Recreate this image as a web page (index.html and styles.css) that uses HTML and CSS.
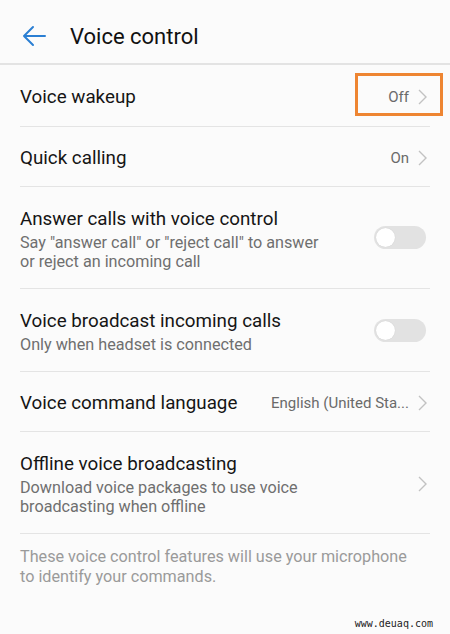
FILE: index.html
```html
<!DOCTYPE html>
<html>
<head>
<meta charset="utf-8">
<link rel="stylesheet" href="styles.css">
</head>
<body>
<div class="screen">
  <header class="topbar">
    <svg class="back" width="24" height="22" viewBox="0 0 24 22"><path d="M23 11H2M11 2L2 11l9 9" fill="none" stroke="#2b7fd3" stroke-width="2" stroke-linecap="round" stroke-linejoin="round"/></svg>
    <h1 class="title">Voice control</h1>
  </header>
  <div class="list">
    <div class="row h62">
      <div class="text"><div class="label">Voice wakeup</div></div>
      <div class="value">Off</div>
      <svg class="chev" width="9" height="16" viewBox="0 0 9 16"><path d="M1 1l7 7-7 7" fill="none" stroke="#c2c2c2" stroke-width="1.4"/></svg>
      <div class="highlight"></div>
    </div>
    <div class="row h60">
      <div class="text"><div class="label">Quick calling</div></div>
      <div class="value">On</div>
      <svg class="chev" width="9" height="16" viewBox="0 0 9 16"><path d="M1 1l7 7-7 7" fill="none" stroke="#c2c2c2" stroke-width="1.4"/></svg>
    </div>
    <div class="row h102">
      <div class="text">
        <div class="label">Answer calls with voice control</div>
        <div class="sub">Say "answer call" or "reject call" to answer<br>or reject an incoming call</div>
      </div>
      <div class="toggle"><div class="knob"></div></div>
    </div>
    <div class="row h83">
      <div class="text">
        <div class="label">Voice broadcast incoming calls</div>
        <div class="sub">Only when headset is connected</div>
      </div>
      <div class="toggle"><div class="knob"></div></div>
    </div>
    <div class="row h60">
      <div class="text"><div class="label">Voice command language</div></div>
      <div class="value">English (United Sta...</div>
      <svg class="chev" width="9" height="16" viewBox="0 0 9 16"><path d="M1 1l7 7-7 7" fill="none" stroke="#c2c2c2" stroke-width="1.4"/></svg>
    </div>
    <div class="row h102">
      <div class="text">
        <div class="label">Offline voice broadcasting</div>
        <div class="sub">Download voice packages to use voice<br>broadcasting when offline</div>
      </div>
      <svg class="chev" width="9" height="16" viewBox="0 0 9 16"><path d="M1 1l7 7-7 7" fill="none" stroke="#c2c2c2" stroke-width="1.4"/></svg>
    </div>
  </div>
  <p class="note">These voice control features will use your microphone<br>to identify your commands.</p>
  <div class="watermark">www.deuaq.com</div>
</div>
</body>
</html>
```
FILE: styles.css
```css
html, body {
  margin: 0;
  padding: 0;
  background: #fbfbfb;
}
.screen {
  position: relative;
  width: 450px;
  height: 634px;
  overflow: hidden;
  font-family: Roboto, "Noto Sans", sans-serif;
  color: #1a1a1a;
}
.topbar {
  height: 63px;
  display: flex;
  align-items: center;
  padding-top: 9px;
  border-bottom: 2px solid #e3e3e3;
  box-sizing: border-box;
  height: 65px;
}
.back {
  margin-left: 22px;
}
.title {
  margin: 0 0 0 24px;
  font-size: 22px;
  font-weight: 400;
  color: #111;
}
.list {
  display: flex;
  flex-direction: column;
}
.row {
  position: relative;
  display: flex;
  align-items: center;
  margin: 0 20px;
  border-bottom: 1px solid #e4e4e4;
  box-sizing: border-box;
}
.h62 { height: 62px; }
.h60 { height: 60px; }
.h102 { height: 102px; }
.h83 { height: 83px; }
.text {
  flex: 1;
  min-width: 0;
  padding-top: 3px;
}
.label {
  font-size: 18.8px;
  line-height: 24px;
  color: #151515;
}
.sub {
  font-size: 16.2px;
  line-height: 19.5px;
  color: #6f6f6f;
  margin-top: 2px;
}
.value {
  font-size: 15px;
  color: #6a6a6a;
  margin-right: 9px;
  padding-top: 2px;
}
.chev {
  margin-right: 3px;
  margin-top: 2px;
}
.toggle {
  width: 52px;
  height: 23px;
  border-radius: 12px;
  background: #e2e2e2;
  display: flex;
  align-items: center;
  padding-left: 2px;
  box-sizing: border-box;
  margin-right: 4px;
}
.knob {
  width: 19px;
  height: 19px;
  border-radius: 50%;
  background: #fff;
  box-shadow: 0 0 1px rgba(0,0,0,0.15);
}
.highlight {
  position: absolute;
  left: 335px;
  top: 8px;
  width: 88px;
  height: 43px;
  border: 3px solid #ee8532;
  box-sizing: border-box;
}
.note {
  margin: 13px 20px 0;
  font-size: 16.2px;
  line-height: 20px;
  color: #9a9a9a;
}
.watermark {
  position: absolute;
  right: 17px;
  bottom: 5px;
  font-family: "DejaVu Sans Mono", monospace;
  font-size: 10px;
  color: #222;
}
```
